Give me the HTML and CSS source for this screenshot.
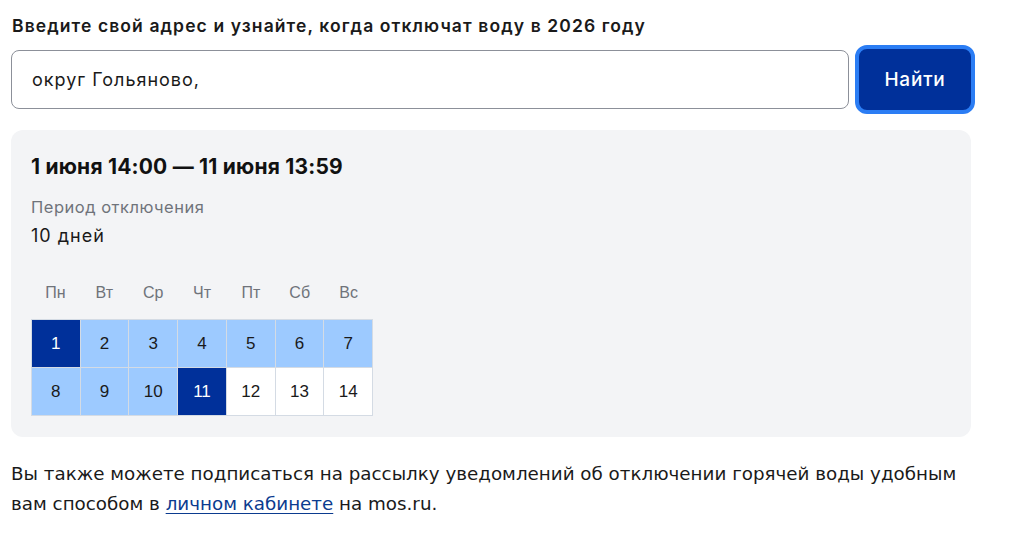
FILE: index.html
```html
<!DOCTYPE html>
<html lang="ru">
<head>
    <meta charset="UTF-8">
    <meta name="viewport" content="width=device-width, initial-scale=1.0">
    <title>Отключение горячей воды</title>
    <link rel="stylesheet" href="styles.css">
</head>
<body>
    <div class="page">
        <h2 class="search-title">Введите свой адрес и узнайте, когда отключат воду в 2026 году</h2>
        <form class="search">
            <input class="search-input" type="text" value="округ Гольяново,">
            <button class="search-btn" type="button">Найти</button>
        </form>

        <div class="result">
            <div class="result-dates">1 июня 14:00 — 11 июня 13:59</div>
            <div class="result-label">Период отключения</div>
            <div class="result-value">10 дней</div>

            <div class="calendar">
                <div class="cal-head">
                    <span>Пн</span><span>Вт</span><span>Ср</span><span>Чт</span><span>Пт</span><span>Сб</span><span>Вс</span>
                </div>
                <div class="cal-grid">
                    <div class="day edge">1</div>
                    <div class="day off">2</div>
                    <div class="day off">3</div>
                    <div class="day off">4</div>
                    <div class="day off">5</div>
                    <div class="day off">6</div>
                    <div class="day off">7</div>
                    <div class="day off">8</div>
                    <div class="day off">9</div>
                    <div class="day off">10</div>
                    <div class="day edge">11</div>
                    <div class="day">12</div>
                    <div class="day">13</div>
                    <div class="day">14</div>
                </div>
            </div>
        </div>

        <p class="note">Вы также можете подписаться на рассылку уведомлений об отключении горячей воды удобным вам способом в <a href="#">личном кабинете</a> на mos.ru.</p>
    </div>
</body>
</html>
```

FILE: styles.css
```css
* {
    margin: 0;
    padding: 0;
    box-sizing: border-box;
}

body {
    background-color: #fff;
    color: #1a1a1a;
    font-family: Inter, "Noto Sans", Arial, sans-serif;
}

.page {
    width: 975px;
    padding: 14px 0 0 11px;
}

.search-title {
    font-size: 17.5px;
    font-weight: 600;
    line-height: 24px;
    letter-spacing: 1.1px;
    padding-left: 1px;
    color: #1a1a1a;
}

.search {
    display: flex;
    align-items: center;
    gap: 6px;
    margin-top: 7px;
}

.search-input {
    flex: 1;
    height: 59px;
    border: 1px solid #8c9099;
    border-radius: 8px;
    padding: 0 20px;
    font-family: Inter, "Noto Sans", Arial, sans-serif;
    font-size: 18px;
    letter-spacing: 1px;
    color: #1a1a1a;
    background: #fff;
    outline: none;
}

.search-btn {
    width: 120px;
    height: 69px;
    border: 4px solid #2b7df4;
    border-radius: 12px;
    background-color: #00309a;
    color: #fff;
    font-family: Inter, "Noto Sans", Arial, sans-serif;
    font-size: 19px;
    font-weight: 500;
    letter-spacing: 0.8px;
    cursor: pointer;
}

.result {
    width: 960px;
    margin-top: 16px;
    background-color: #f3f4f6;
    border-radius: 12px;
    padding: 24px 20px 21px;
}

.result-dates {
    font-size: 21px;
    font-weight: 700;
    line-height: 26px;
    letter-spacing: 0.2px;
    color: #111;
}

.result-label {
    margin-top: 16px;
    font-size: 16.5px;
    line-height: 22px;
    letter-spacing: 0.5px;
    color: #6f737a;
}

.result-value {
    margin-top: 7px;
    font-size: 18px;
    line-height: 22px;
    letter-spacing: 1px;
    color: #1a1a1a;
}

.calendar {
    margin-top: 36px;
    width: 342px;
    font-family: "Liberation Sans", Arial, sans-serif;
}

.cal-head {
    display: grid;
    grid-template-columns: repeat(7, 1fr);
    text-align: center;
    font-size: 16px;
    line-height: 20px;
    color: #6f737a;
}

.cal-grid {
    display: grid;
    grid-template-columns: repeat(7, 1fr);
    margin-top: 16px;
    border-left: 1px solid #d4dbe4;
    border-top: 1px solid #d4dbe4;
}

.day {
    height: 48px;
    display: flex;
    align-items: center;
    justify-content: center;
    font-size: 17px;
    color: #1a1a1a;
    background-color: #fff;
    border-right: 1px solid #d4dbe4;
    border-bottom: 1px solid #d4dbe4;
}

.day.off {
    background-color: #9dcaff;
}

.day.edge {
    background-color: #00309a;
    color: #fff;
}

.note {
    margin-top: 22px;
    font-family: "DejaVu Sans", Verdana, sans-serif;
    font-size: 18.3px;
    line-height: 30px;
    color: #1a1a1a;
}

.note a {
    color: #0b3b8f;
    text-decoration: underline;
    text-underline-offset: 3px;
}
```
